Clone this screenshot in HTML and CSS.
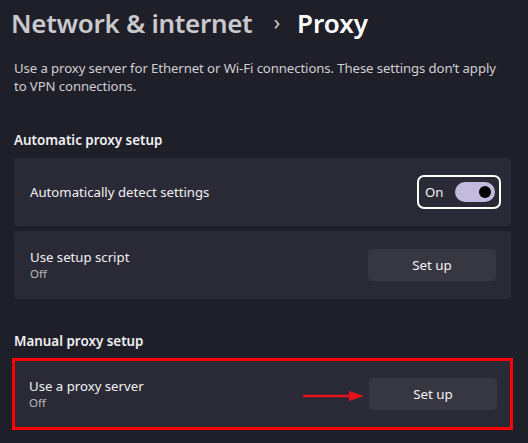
FILE: index.html
```html
<!DOCTYPE html>
<html>
<head>
<meta charset="utf-8">
<title>Proxy</title>
<link rel="stylesheet" href="styles.css">
</head>
<body>
<div class="page">
  <h1 class="title"><span class="crumb">Network &amp; internet</span><span class="chev">&#8250;</span><span class="current">Proxy</span></h1>

  <p class="desc">Use a proxy server for Ethernet or Wi-Fi connections. These settings don’t apply to VPN connections.</p>

  <h2 class="section">Automatic proxy setup</h2>
  <div class="card">
    <div class="label">Automatically detect settings</div>
    <div class="toggle-wrap">
      <span class="toggle-text">On</span>
      <span class="toggle"><span class="knob"></span></span>
    </div>
  </div>
  <div class="card">
    <div class="label">Use setup script<div class="sub">Off</div></div>
    <button class="btn">Set up</button>
  </div>

  <h2 class="section manual">Manual proxy setup</h2>
  <div class="highlight">
    <div class="card inner">
      <div class="label">Use a proxy server<div class="sub">Off</div></div>
      <div class="right">
        <svg class="arrow" width="62" height="12" viewBox="0 0 62 12">
          <line x1="0" y1="6" x2="48" y2="6" stroke="#e8101a" stroke-width="2.5"/>
          <polygon points="46,1 61,6 46,11" fill="#e8101a"/>
        </svg>
        <button class="btn">Set up</button>
      </div>
    </div>
  </div>
</div>
</body>
</html>
```

FILE: styles.css
```css
html, body {
  margin: 0;
  background-color: #1f1f2a;
}

.page {
  padding: 5px 17px 0 14px;
  font-family: "Noto Sans", "Open Sans", sans-serif;
  color: #ffffff;
}

.title {
  margin: 0;
  font-size: 26px;
  font-weight: 600;
  line-height: 36px;
  letter-spacing: -0.3px;
}

.crumb {
  color: #c9c9cc;
  margin-left: -3px;
}

.chev {
  color: #c9c9cc;
  font-weight: 400;
  font-size: 22px;
  margin: 0 17px 0 21px;
  position: relative;
  top: -3px;
}

.current {
  color: #ffffff;
  letter-spacing: 0;
}

.desc {
  margin: 17px 0 0 0;
  max-width: 492px;
  font-size: 13.2px;
  line-height: 18px;
  color: #d0d0d3;
  letter-spacing: -0.1px;
}

.section {
  margin: 36px 0 9px 0;
  font-size: 13.4px;
  font-weight: 600;
  line-height: 18px;
  color: #f0f0f2;
}

.section.manual {
  margin-top: 33px;
  margin-bottom: 8px;
}

.card {
  display: flex;
  align-items: center;
  justify-content: space-between;
  height: 68px;
  box-sizing: border-box;
  padding: 0 15px 0 16px;
  margin-bottom: 5px;
  background-color: #2a2a36;
  border-radius: 4px;
  font-size: 13.2px;
}

.label {
  color: #f2f2f4;
  line-height: 18px;
}

.sub {
  font-size: 11.5px;
  line-height: 16px;
  color: #b8b8bd;
}

.toggle-wrap {
  display: flex;
  align-items: center;
  width: 84px;
  height: 34px;
  box-sizing: border-box;
  border: 2px solid #ffffff;
  border-radius: 7px;
  padding: 0 4px 0 6px;
  margin-right: -5px;
  justify-content: space-between;
}

.toggle-text {
  font-size: 13.2px;
  color: #f2f2f4;
}

.toggle {
  display: flex;
  align-items: center;
  justify-content: flex-end;
  width: 40px;
  height: 20px;
  box-sizing: border-box;
  padding-right: 4px;
  border-radius: 10px;
  background-color: #c3bbdf;
}

.knob {
  width: 12px;
  height: 12px;
  border-radius: 50%;
  background-color: #000000;
}

.btn {
  width: 128px;
  height: 32px;
  border: 0;
  border-radius: 4px;
  background-color: #373742;
  color: #f2f2f4;
  font-family: "Noto Sans", "Open Sans", sans-serif;
  font-size: 13.4px;
}

.highlight {
  border: 3px solid #ff0000;
  margin: 0 -2px 0 -2px;
}

.highlight .card {
  margin: 0;
  height: 66px;
  border-radius: 0;
  padding-left: 14px;
  padding-right: 13px;
}

.right {
  display: flex;
  align-items: center;
}

.arrow {
  margin-right: 4px;
  margin-top: 4px;
}
```
